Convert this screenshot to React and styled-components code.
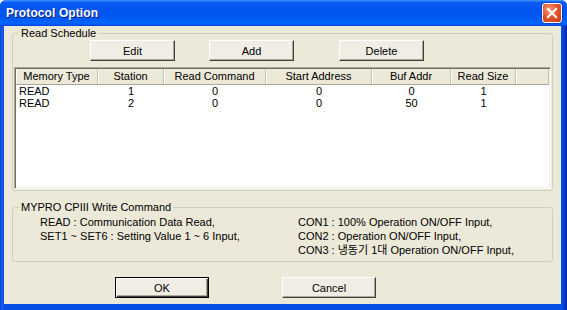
import styled, { createGlobalStyle } from 'styled-components';

const GlobalStyle = createGlobalStyle`
  html, body {
    margin: 0;
    padding: 0;
    overflow: hidden;
    background: #ffffff;
  }
  * {
    box-sizing: border-box;
  }
`;

const FONT = `"Liberation Sans", "Noto Sans CJK KR", sans-serif`;

const Window = styled.div`
  width: 567px;
  height: 310px;
  display: flex;
  flex-direction: column;
  background: linear-gradient(to right, #0a3fd6 0px, #1c5df0 2px, #0650e8 4px, #0650e8 calc(100% - 6px), #0038c8 calc(100% - 2px), #00209e 100%);
  border-radius: 6px 6px 0 0;
  overflow: hidden;
  font-family: ${FONT};
  font-size: 11px;
  color: #000;
`;

const TitleBar = styled.div`
  height: 26px;
  flex: none;
  display: flex;
  align-items: center;
  justify-content: space-between;
  padding: 0 5px 0 6px;
  background: linear-gradient(
    to bottom,
    #3d95ff 0%,
    #0a5cf2 10%,
    #0053ee 35%,
    #0058f0 70%,
    #0066ff 88%,
    #0059f5 94%,
    #0040d8 100%
  );
`;

const Title = styled.span`
  color: #fff;
  font-weight: bold;
  font-size: 12px;
  letter-spacing: 0.1px;
  text-shadow: 1px 1px 0 #0a1e8c;
`;

const CloseButton = styled.div`
  width: 20px;
  height: 20px;
  border: 1px solid #fff;
  border-radius: 3px;
  background: radial-gradient(circle at 35% 30%, #f59a7c 0%, #e2552c 45%, #c83c10 100%);
  display: flex;
  align-items: center;
  justify-content: center;
  box-shadow: 0 0 0 1px rgba(0, 40, 140, 0.4);
`;

const Client = styled.div`
  flex: 1;
  margin: 0 6px 6px 4px;
  background: #ece9d8;
  padding: 1px 8px 0 8px;
  display: flex;
  flex-direction: column;
`;

const Group = styled.fieldset`
  margin: ${(p) => p.$top}px 0 0 0;
  padding: 0 1px ${(p) => p.$bottom}px 1px;
  border: 1px solid #d0d0bf;
  border-radius: 3px;
  min-width: 0;
`;

const Legend = styled.legend`
  padding: 0 2px;
  margin-left: 5px;
  font-size: 11px;
  line-height: 13px;
  color: #000;
`;

const ButtonRow = styled.div`
  display: grid;
  grid-template-columns: 85px 34px 85px 45px 85px;
  padding-left: ${(p) => p.$indent}px;
  height: 21px;
`;

const Button = styled.div`
  grid-column: ${(p) => p.$col || 'auto'};
  width: ${(p) => p.$w || 85}px;
  height: 21px;
  display: flex;
  align-items: center;
  justify-content: center;
  background: #f0eee4;
  font-size: 11px;
  border: 1px solid;
  border-color: ${(p) => (p.$default ? '#000 #000 #000 #000' : '#ffffff #404040 #404040 #ffffff')};
  box-shadow: ${(p) =>
    p.$default
      ? 'inset 1px 1px 0 #ffffff, inset -1px -1px 0 #404040, inset -2px -2px 0 #aca899'
      : 'inset -1px -1px 0 #aca899'};
`;

const ListBox = styled.div`
  margin-top: 6px;
  height: 122px;
  background: #fff;
  border: 1px solid;
  border-color: #aca899 #ffffff #ffffff #aca899;
  box-shadow: inset 1px 1px 0 #716f64, inset -1px -1px 0 #f1efe2;
  padding: 1px;
  display: flex;
  flex-direction: column;
`;

const COLS = '82px 66px 102px 106px 79px 65px 1fr';

const HeaderRow = styled.div`
  display: grid;
  grid-template-columns: ${COLS};
  height: 16px;
  background: #ece9d8;
  border-bottom: 1px solid #aca899;
`;

const HeaderCell = styled.div`
  display: flex;
  align-items: center;
  justify-content: center;
  line-height: 15px;
  border-right: 1px solid #c7c4b4;
  box-shadow: inset 1px 0 0 #ffffff;
  white-space: nowrap;
  overflow: hidden;
`;

const Row = styled.div`
  display: grid;
  grid-template-columns: ${COLS};
  height: 12px;
  line-height: 12px;
`;

const Cell = styled.div`
  text-align: ${(p) => (p.$left ? 'left' : 'center')};
  padding-left: ${(p) => (p.$left ? 3 : 0)}px;
  white-space: nowrap;
`;

const NoteGrid = styled.div`
  display: grid;
  grid-template-columns: 258px 1fr;
  padding: 1px 0 0 26px;
  line-height: 14px;
`;

const NoteCol = styled.div`
  display: flex;
  flex-direction: column;
  white-space: nowrap;
`;

const FooterRow = styled.div`
  display: flex;
  gap: 73px;
  padding-left: 103px;
  margin-top: 15px;
`;

const columns = ['Memory Type', 'Station', 'Read Command', 'Start Address', 'Buf Addr', 'Read Size', ''];

const rows = [
  ['READ', '1', '0', '0', '0', '1'],
  ['READ', '2', '0', '0', '50', '1'],
];

export default function App() {
  return (
    <>
      <GlobalStyle />
      <Window>
        <TitleBar>
          <Title>Protocol Option</Title>
          <CloseButton>
            <svg width="12" height="12" viewBox="0 0 12 12">
              <path d="M2 2 L10 10 M10 2 L2 10" stroke="#fff" strokeWidth="2.2" strokeLinecap="square" />
            </svg>
          </CloseButton>
        </TitleBar>
        <Client>
          <Group $top={0} $bottom={1}>
            <Legend>Read Schedule</Legend>
            <ButtonRow $indent={76}>
              <Button $col={1}>Edit</Button>
              <Button $col={3}>Add</Button>
              <Button $col={5}>Delete</Button>
            </ButtonRow>
            <ListBox>
              <HeaderRow>
                {columns.map((c, i) => (
                  <HeaderCell key={i}>{c}</HeaderCell>
                ))}
              </HeaderRow>
              {rows.map((r, i) => (
                <Row key={i}>
                  {r.map((v, j) => (
                    <Cell key={j} $left={j === 0}>
                      {v}
                    </Cell>
                  ))}
                </Row>
              ))}
            </ListBox>
          </Group>
          <Group $top={10} $bottom={4}>
            <Legend>MYPRO CPIII Write Command</Legend>
            <NoteGrid>
              <NoteCol>
                <span>READ : Communication Data Read,</span>
                <span>SET1 ~ SET6 : Setting Value 1 ~ 6 Input,</span>
              </NoteCol>
              <NoteCol>
                <span>CON1 : 100% Operation ON/OFF Input,</span>
                <span>CON2 : Operation ON/OFF Input,</span>
                <span>CON3 : 냉동기 1대 Operation ON/OFF Input,</span>
              </NoteCol>
            </NoteGrid>
          </Group>
          <FooterRow>
            <Button $w={94} $default>
              OK
            </Button>
            <Button $w={94}>Cancel</Button>
          </FooterRow>
        </Client>
      </Window>
    </>
  );
}
